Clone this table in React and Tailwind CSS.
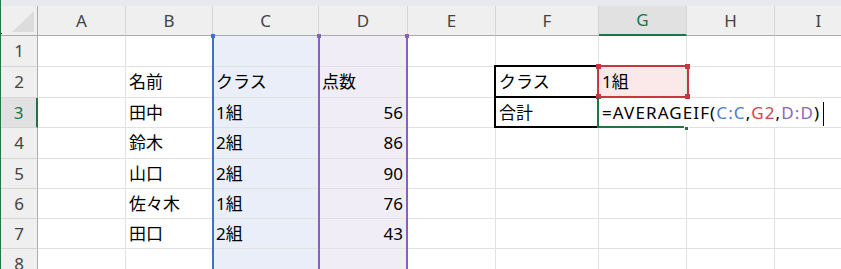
import React from 'react';

const COLS = ['A', 'B', 'C', 'D', 'E', 'F', 'G', 'H', 'I'];
const ROWS = [1, 2, 3, 4, 5, 6, 7, 8];

const DATA = {
  2: { B: '名前', C: 'クラス', D: '点数', F: 'クラス', G: '1組' },
  3: { B: '田中', C: '1組', D: '56', F: '合計' },
  4: { B: '鈴木', C: '2組', D: '86' },
  5: { B: '山口', C: '2組', D: '90' },
  6: { B: '佐々木', C: '1組', D: '76' },
  7: { B: '田口', C: '2組', D: '43' },
};

function cellBg(col, row) {
  if (col === 'C') return 'bg-[#e9eef8]';
  if (col === 'D') return 'bg-[#f1edf7]';
  if (col === 'G' && row === 2) return 'bg-[#fbe9e9]';
  return 'bg-white';
}

function Handle({ className }) {
  return <div className={`absolute w-[5px] h-[5px] ${className}`} />;
}

function Cell({ col, row }) {
  const value = DATA[row]?.[col];
  const isNumber = value && /^\d+$/.test(value);
  // text spilling out of G3 hides the grid lines to its right
  const noRight = row === 3 && (col === 'G' || col === 'H' || col === 'I');
  const bg = row === 3 && (col === 'H' || col === 'I') ? 'bg-transparent' : cellBg(col, row);

  if (col === 'G' && row === 3) {
    return (
      <div className="relative flex items-center pl-[3px] border-b border-[#e1e1e1] whitespace-nowrap tracking-[1.1px]">
        <span className="shrink-0">=AVERAGEIF(</span>
        <span className="shrink-0 text-[#4a7dd6]">C:C</span>
        <span className="shrink-0">,</span>
        <span className="shrink-0 text-[#d2454b]">G2</span>
        <span className="shrink-0">,</span>
        <span className="shrink-0 text-[#9062c6]">D:D</span>
        <span className="shrink-0">)</span>
        <span className="shrink-0 inline-block w-px h-[24px] bg-black ml-[3px] self-end mb-px" />
        {/* active cell frame */}
        <div className="absolute z-10 -left-[2px] -top-px w-[2px] h-[30px] bg-[#217346]" />
        <div className="absolute z-10 -left-[2px] -bottom-px w-[90px] h-[2px] bg-[#217346]" />
        <Handle className="z-10 left-[85px] -bottom-[4px] bg-[#217346] border border-white" />
      </div>
    );
  }

  return (
    <div
      className={`flex items-center px-[3px] border-b border-[#e1e1e1] ${noRight ? '' : 'border-r'} ${bg} ${
        isNumber ? 'justify-end pr-[4px]' : ''
      }`}
    >
      {value}
    </div>
  );
}

export default function App() {
  return (
    <div className="relative w-[841px] h-[269px] overflow-hidden bg-white text-[17px] text-black font-['Noto_Sans','Noto_Sans_CJK_JP',sans-serif] border-l border-[#1f7a45]">
      <div className="h-[6px] bg-[#e7e9ec]" />

      <div className="relative grid grid-cols-[37px_88px_87px_106px_89px_88px_103px_88px_88px_88px] grid-rows-[30px_31px_31px_30px_31px_30px_30px_30px_30px]">
        {/* corner */}
        <div className="relative bg-[#efefef] border-r border-r-[#ababab] border-b border-b-[#ababab]">
          <svg className="absolute left-0 top-0" width="37" height="30">
            <polygon points="33,5 33,26 11,26" fill="#dcdcdc" />
          </svg>
          <div className="absolute -left-px bottom-[1px] w-[2px] h-px bg-black" />
        </div>
        {COLS.map((c) =>
          c === 'G' ? (
            <div
              key={c}
              className="flex items-center justify-center bg-[#e1e1e1] border-r border-r-[#d5d5d5] border-b-2 border-b-[#217346] text-[#217346]"
            >
              {c}
            </div>
          ) : (
            <div
              key={c}
              className="flex items-center justify-center bg-[#efefef] border-r border-r-[#d5d5d5] border-b border-b-[#ababab] text-[#444]"
            >
              {c}
            </div>
          )
        )}

        {ROWS.map((r) => (
          <React.Fragment key={r}>
            {r === 3 ? (
              <div className="flex items-center justify-center bg-[#e1e1e1] border-r-2 border-r-[#217346] border-b border-b-[#d5d5d5] text-[#217346]">
                {r}
              </div>
            ) : (
              <div className="flex items-center justify-center bg-[#efefef] border-r border-r-[#ababab] border-b border-b-[#d5d5d5] text-[#444]">
                {r}
              </div>
            )}
            {COLS.map((c) => (
              <Cell key={c} col={c} row={r} />
            ))}
          </React.Fragment>
        ))}

        {/* formula range C:C */}
        <div className="absolute left-[211px] top-[30px] w-[2px] h-[240px] bg-[#3f6fc9]" />
        <Handle className="left-[210px] top-[28px] !w-[4px] !h-[4px] bg-[#3f6fc9]" />

        {/* formula range D:D */}
        <div className="absolute left-[317px] top-[30px] w-[2px] h-[240px] bg-[#8a5fc0]" />
        <div className="absolute left-[405px] top-[30px] w-[2px] h-[240px] bg-[#8a5fc0]" />
        <Handle className="left-[316px] top-[28px] !w-[4px] !h-[4px] bg-[#8a5fc0]" />
        <Handle className="left-[404px] top-[28px] !w-[4px] !h-[4px] bg-[#8a5fc0]" />

        {/* F2:F3 outline */}
        <div className="absolute left-[493px] top-[59px] w-[105px] h-[63px] border-2 border-black" />
        <div className="absolute left-[493px] top-[90px] w-[105px] h-[2px] bg-black" />

        {/* formula reference G2 */}
        <div className="absolute left-[596px] top-[59px] w-[92px] h-[33px] border-2 border-[#c8363f]" />
        <Handle className="left-[595px] top-[58px] bg-[#c8363f]" />
        <Handle className="left-[684px] top-[58px] bg-[#c8363f]" />
        <Handle className="left-[595px] top-[88px] bg-[#c8363f]" />
        <Handle className="left-[684px] top-[88px] bg-[#c8363f]" />
      </div>
    </div>
  );
}
